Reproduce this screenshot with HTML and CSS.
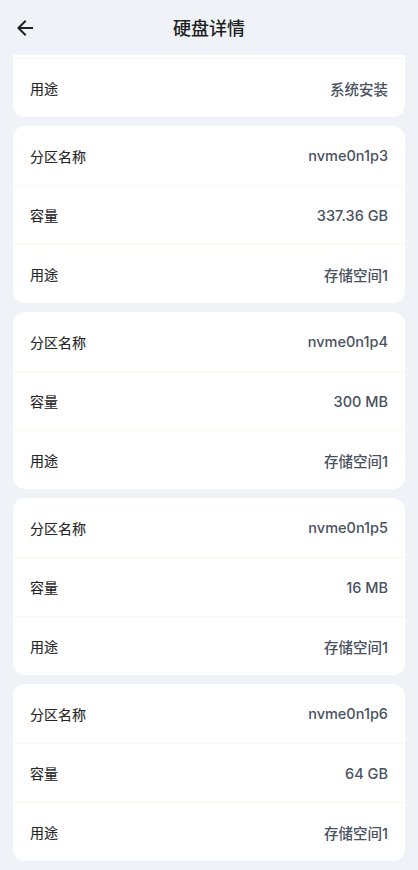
FILE: index.html
```html
<!DOCTYPE html>
<html lang="zh-CN">
  <head>
    <meta charset="UTF-8" />
    <meta name="viewport" content="width=device-width, initial-scale=1.0" />
    <title>硬盘详情</title>
    <link rel="stylesheet" href="styles.css">
  </head>
  <body>
    <!-- 顶部栏 -->
    <header class="topbar">
      <button class="back-btn" aria-label="返回">
        <svg viewBox="0 0 24 24" width="24" height="24">
          <path d="M20 11H7.83l5.59-5.59L12 4l-8 8 8 8 1.41-1.41L7.83 13H20v-2z" fill="#1f1f1f"/>
        </svg>
      </button>
      <h1 class="title">硬盘详情</h1>
    </header>

    <!-- 分区列表 -->
    <main class="part-list">
      <section class="part-card">
        <div class="row"><span class="label">分区名称</span><span class="value">nvme0n1p1</span></div>
        <div class="row"><span class="label">容量</span><span class="value">512 MB</span></div>
        <div class="row"><span class="label">用途</span><span class="value">系统引导</span></div>
      </section>
      <section class="part-card">
        <div class="row"><span class="label">分区名称</span><span class="value">nvme0n1p2</span></div>
        <div class="row"><span class="label">容量</span><span class="value">100 GB</span></div>
        <div class="row"><span class="label">用途</span><span class="value">系统安装</span></div>
      </section>
      <section class="part-card">
        <div class="row"><span class="label">分区名称</span><span class="value">nvme0n1p3</span></div>
        <div class="row"><span class="label">容量</span><span class="value">337.36 GB</span></div>
        <div class="row"><span class="label">用途</span><span class="value">存储空间1</span></div>
      </section>
      <section class="part-card">
        <div class="row"><span class="label">分区名称</span><span class="value">nvme0n1p4</span></div>
        <div class="row"><span class="label">容量</span><span class="value">300 MB</span></div>
        <div class="row"><span class="label">用途</span><span class="value">存储空间1</span></div>
      </section>
      <section class="part-card">
        <div class="row"><span class="label">分区名称</span><span class="value">nvme0n1p5</span></div>
        <div class="row"><span class="label">容量</span><span class="value">16 MB</span></div>
        <div class="row"><span class="label">用途</span><span class="value">存储空间1</span></div>
      </section>
      <section class="part-card">
        <div class="row"><span class="label">分区名称</span><span class="value">nvme0n1p6</span></div>
        <div class="row"><span class="label">容量</span><span class="value">64 GB</span></div>
        <div class="row"><span class="label">用途</span><span class="value">存储空间1</span></div>
      </section>
    </main>

    <script>
      // 滚动到列表底部
      window.scrollTo(0, document.body.scrollHeight);
    </script>
  </body>
</html>
```

FILE: styles.css
```css
html,
body {
  margin: 0;
  padding: 0;
}

body {
  background-color: #eff2f7;
  font-family: "Inter", "Noto Sans CJK SC", sans-serif;
  color: #222;
}

/* 顶部栏 */
.topbar {
  position: fixed;
  top: 0;
  left: 0;
  right: 0;
  height: 55px;
  background-color: #eff2f7;
  display: flex;
  align-items: center;
  justify-content: center;
  z-index: 10;
}

.back-btn {
  position: absolute;
  left: 13px;
  top: 16px;
  width: 24px;
  height: 24px;
  padding: 0;
  border: none;
  background: transparent;
  cursor: pointer;
}

.back-btn svg {
  display: block;
}

.title {
  margin: 0;
  font-size: 18px;
  font-weight: 500;
  color: #1f1f1f;
  line-height: 1;
  padding-top: 3px;
}

/* 分区列表 */
.part-list {
  display: flex;
  flex-direction: column;
  gap: 9px;
  padding: 64px 13px 9px;
}

.part-card {
  background-color: #fff;
  border-radius: 12px;
  overflow: hidden;
}

.row {
  height: 59px;
  box-sizing: border-box;
  display: flex;
  align-items: center;
  justify-content: space-between;
  padding: 0 17px;
}

.row + .row {
  border-top: 1px solid #faf8ec;
}

.label {
  font-size: 14px;
  font-weight: 400;
  color: #262626;
  -webkit-text-stroke: 0.15px #262626;
}

.value {
  font-size: 14.5px;
  font-weight: 500;
  color: #4a5261;
}
```
